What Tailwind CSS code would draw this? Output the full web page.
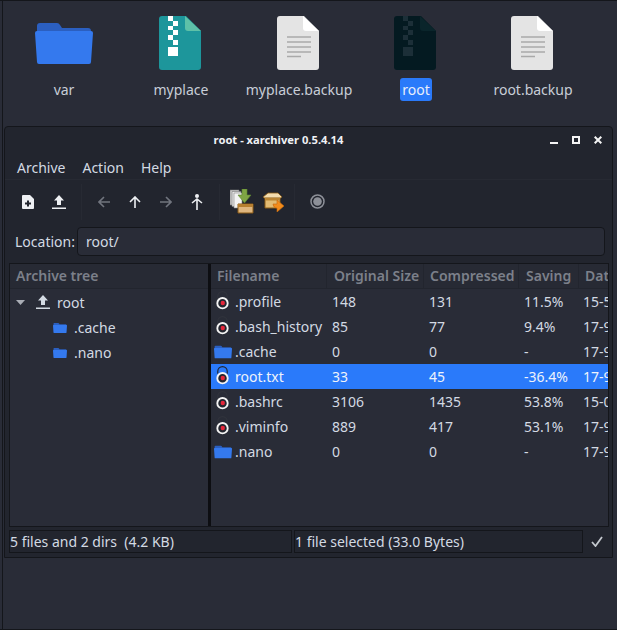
<!DOCTYPE html>
<html lang="en">
<head>
  <meta charset="UTF-8" />
  <title>root - xarchiver</title>
  <script src="https://cdn.jsdelivr.net/npm/@tailwindcss/browser@4"></script>
</head>
<body class="bg-[#292c37] font-['Noto_Sans',sans-serif] text-[14px] text-[#d3dae3] overflow-hidden">
  <svg class="hidden">
    <symbol id="folder" viewBox="0 0 58 41">
      <path d="M2 3q0-3 3-3h17q2 0 3 2l2 3h26q3 0 3 3v6H2z" fill="#2b5fc0"/>
      <path d="M0 10q0-2 2-2h54q2 0 2 2l-2 29q0 2-2 2H4q-2 0-2-2z" fill="#3479ee"/>
    </symbol>
    <symbol id="doc" viewBox="0 0 42 54">
      <path d="M3 0h24l15 15v36q0 3-3 3H3q-3 0-3-3V3q0-3 3-3z" fill="#e4e4e4"/>
      <path d="M26 0l16 15H29q-3 0-3-3z" fill="#fff"/>
      <path d="M10 21h24M10 26h24M10 31h24M10 36h24M10 40.500h14" stroke="#a9a9a9" stroke-width="1.400"/>
    </symbol>
    <symbol id="upload" viewBox="0 0 14 14">
      <path d="M7 0l5 5.500H9V10H5V5.500H2z" fill="currentColor"/><path d="M0 12.500h14V14H0z" fill="currentColor"/>
    </symbol>
    <symbol id="lock" viewBox="0 0 18 22">
      <path d="M4 8V5.500a5 5 0 0 1 10 0V8" fill="none" stroke="currentColor" stroke-width="1.200"/>
      <circle cx="9" cy="12.800" r="5.500" fill="#23262f" stroke="#f4f4f4" stroke-width="2"/>
      <circle cx="9.300" cy="12.600" r="2.300" fill="#e5263a"/>
    </symbol>
  </svg>

  <div class="h-[630px] w-[617px] border-y border-[#14161b]">
    <div class="ml-[2px] h-full border-l border-[#14161b]">
      <div class="h-[125px] pl-[1px] pt-[15px] flex">
        <div class="w-[120px] flex flex-col items-center">
          <svg class="w-[58px] h-[41px] mt-[7px] mb-[14px]"><use href="#folder"/></svg>
          <span class="leading-[23px] text-[#c8ced8]">var</span>
        </div>
        <div class="w-[114px] flex flex-col items-center">
          <svg class="w-[42px] h-[54px] mb-[8px] -translate-x-[1px]" viewBox="0 0 42 54">
            <path d="M3 0h24l15 15v36q0 3-3 3H3q-3 0-3-3V3q0-3 3-3z" fill="#1d969b"/>
            <path d="M26 0l16 15H29q-3 0-3-3z" fill="#5ec1a8"/>
            <path d="M9 0h5v5H9zM14 5h5v5h-5zM9 10h5v4H9zM14 14h5v5h-5zM9 19h5v5H9zM14 24h5v5h-5zM9 31h10v9H9z" fill="#fff"/>
          </svg>
          <span class="leading-[23px] text-[#c8ced8]">myplace</span>
        </div>
        <div class="w-[122px] flex flex-col items-center">
          <svg class="w-[42px] h-[54px] mb-[8px] -translate-x-[1px]"><use href="#doc"/></svg>
          <span class="leading-[23px] text-[#c8ced8] whitespace-nowrap">myplace.backup</span>
        </div>
        <div class="w-[112px] flex flex-col items-center">
          <svg class="w-[42px] h-[54px] mb-[8px] -translate-x-[1px]" viewBox="0 0 42 54">
            <path d="M3 0h24l15 15v36q0 3-3 3H3q-3 0-3-3V3q0-3 3-3z" fill="#041a21"/>
            <path d="M26 0l16 15H29q-3 0-3-3z" fill="#0a252b"/>
            <path d="M9 0h5v5H9zM14 5h5v5h-5zM9 10h5v4H9zM14 14h5v5h-5zM9 19h5v5H9zM14 24h5v5h-5zM9 31h10v9H9z" fill="#1c2f38"/>
          </svg>
          <span class="h-[23px] leading-[23px] px-[2px] rounded-[3px] bg-[#2a7afa] text-[#e8eefa]">root</span>
        </div>
        <div class="w-[122px] flex flex-col items-center">
          <svg class="w-[42px] h-[54px] mb-[8px] -translate-x-[1px]"><use href="#doc"/></svg>
          <span class="leading-[23px] text-[#c8ced8] whitespace-nowrap">root.backup</span>
        </div>
      </div>

      <div class="ml-[1px] w-[609px] h-[432px] bg-[#22252e] border border-[#14161b] rounded-t-[4px] flex flex-col">
        <!-- title bar -->
        <div class="relative h-[26px] shrink-0 flex items-center justify-center pt-[1px] pr-[60px] text-[11.200px] font-bold text-[#f0f2f5]">
          <span>root - xarchiver 0.5.4.14</span>
          <div class="absolute right-[10px] top-[9px] flex items-center gap-[14px]">
            <svg class="w-[8px] h-[8px]" viewBox="0 0 8 8"><path d="M0 6h8v2H0z" fill="#f4f4f4"/></svg>
            <svg class="w-[8px] h-[8px]" viewBox="0 0 8 8"><path d="M1 1h6v6H1z" fill="none" stroke="#f4f4f4" stroke-width="2"/></svg>
            <svg class="w-[8px] h-[8px]" viewBox="0 0 8 8"><path d="M.7.7l6.600 6.600M7.300.700L.7 7.300" stroke="#f4f4f4" stroke-width="2"/></svg>
          </div>
        </div>
        <!-- menu -->
        <div class="h-[27px] shrink-0 flex items-center gap-[17px] pt-[2px] pl-[12px] border-b border-[#272a33]">
          <span>Archive</span><span>Action</span><span>Help</span>
        </div>
        <!-- toolbar -->
        <div class="h-[45px] shrink-0 flex items-center pb-[2px]">
          <div class="flex items-center w-[77px] pl-[17px] gap-[18px] border-r border-[#272a33] h-[36px]">
            <svg class="w-[12px] h-[14px]" viewBox="0 0 12 14"><path d="M1 0h7l4 4v9q0 1-1 1H1q-1 0-1-1V1q0-1 1-1z" fill="#eef0f3"/><path d="M5 5.500h2v2h2v2H7v2H5v-2H3v-2h2z" fill="#22252e"/></svg>
            <svg class="w-[14px] h-[14px] text-[#eef0f3]"><use href="#upload"/></svg>
          </div>
          <div class="flex items-center w-[138px] pl-[16px] gap-[19px] border-r border-[#272a33] h-[36px]">
            <svg class="w-[12px] h-[12px]" viewBox="0 0 12 12"><path d="M6 1L1 6l5 5M1 6h11" fill="none" stroke="#71757e" stroke-width="1.600"/></svg>
            <svg class="w-[12px] h-[12px]" viewBox="0 0 12 12"><path d="M1 6l5-5 5 5M6 1v11" fill="none" stroke="#eef0f3" stroke-width="1.600"/></svg>
            <svg class="w-[12px] h-[12px]" viewBox="0 0 12 12"><path d="M6 1l5 5-5 5M11 6H0" fill="none" stroke="#71757e" stroke-width="1.600"/></svg>
            <svg class="w-[12px] h-[16px]" viewBox="0 0 12 16"><circle cx="6" cy="2" r="2" fill="#eef0f3"/><path d="M1 9l5-4 5 4M6 5v11" fill="none" stroke="#eef0f3" stroke-width="1.600"/></svg>
          </div>
          <div class="flex items-center w-[75px] pl-[10px] gap-[8px] border-r border-[#272a33] h-[36px]">
            <svg class="w-[24px] h-[25px]" viewBox="0 0 24 25">
              <path d="M0 1h9v15H0z" fill="#cfcfcf" stroke="#777" stroke-width=".6"/><path d="M2 2.500h9v15H2z" fill="#e6e6e6" stroke="#777" stroke-width=".6"/><path d="M4 4h8v15H4z" fill="#f4f4f4" stroke="#888" stroke-width=".6"/>
              <path d="M12 0h5v6h4l-6.500 8L8 6h4z" fill="#7fa544" stroke="#5d8430" stroke-width=".6"/>
              <path d="M8 15h15v9H8z" fill="#dfb67f" stroke="#8a5a14"/><path d="M8 15h15v3H8z" fill="#b67f30"/>
            </svg>
            <svg class="w-[23px] h-[20px]" viewBox="0 0 23 20">
              <path d="M1 5l5-4h10l4 4-3 2H4z" fill="#f3dcae" stroke="#8a5a14" stroke-width=".8"/>
              <path d="M3 6h15v10H3z" fill="#e2bb73" stroke="#8a5a14"/><path d="M3 6h15v2.500H3z" fill="#b98433"/>
              <path d="M11 12h4V8l7 6-7 6v-4h-1q-3-1-3-4z" fill="#f28c1c" stroke="#c2660d" stroke-width=".6"/>
            </svg>
          </div>
          <svg class="ml-[15px] w-[15px] h-[15px]" viewBox="0 0 15 15"><circle cx="7.500" cy="7.500" r="6.500" fill="none" stroke="#8d9098" stroke-width="1.500"/><circle cx="7.500" cy="7.500" r="4.300" fill="#8d9098"/></svg>
        </div>
        <!-- location -->
        <div class="mt-[2px] h-[29px] shrink-0 flex items-center pl-[10px] pr-[7px]">
          <span class="w-[62px]">Location:</span>
          <div class="flex-1 h-[29px] leading-[27px] px-[8px] bg-[#292c37] border border-[#14161b] rounded-[4px]">root/</div>
        </div>
        <!-- panes -->
        <div class="mt-[7px] ml-[4px] mr-[3px] h-[264px] shrink-0 flex border border-[#14161b] bg-[#292c37]">
          <div class="w-[198px] shrink-0">
            <div class="h-[25px] leading-[24px] pl-[6px] font-semibold text-[#7c808a] bg-[#272a34] border-b border-[#22252e]">Archive tree</div>
            <div class="h-[26px] flex items-center pl-[6px]">
              <svg class="w-[9px] h-[5px]" viewBox="0 0 9 5"><path d="M0 0h9L4.500 5z" fill="#a9adb5"/></svg>
              <svg class="ml-[11px] w-[14px] h-[14px]"><use href="#upload"/></svg>
              <span class="ml-[7px]">root</span>
            </div>
            <div class="h-[25px] flex items-center pl-[43px]">
              <svg class="w-[14px] h-[12px]"><use href="#folder"/></svg>
              <span class="ml-[7px]">.cache</span>
            </div>
            <div class="h-[25px] flex items-center pl-[43px]">
              <svg class="w-[14px] h-[12px]"><use href="#folder"/></svg>
              <span class="ml-[7px]">.nano</span>
            </div>
          </div>
          <div class="w-[3px] shrink-0 bg-[#0d0e12]"></div>
          <div class="flex-1 overflow-hidden">
            <div class="h-[25px] leading-[24px] grid grid-cols-[116px_97px_95px_60px_60px] font-semibold text-[#7c808a] bg-[#272a34] border-b border-[#22252e] whitespace-nowrap">
              <span class="pl-[6px] border-r border-[#22252e]">Filename</span>
              <span class="pl-[7px] border-r border-[#22252e]">Original Size</span>
              <span class="pl-[6px] border-r border-[#22252e]">Compressed</span>
              <span class="pl-[7px] border-r border-[#22252e]">Saving</span>
              <span class="pl-[6px]">Date</span>
            </div>
            <div class="h-[25px] leading-[25px] grid grid-cols-[116px_97px_95px_59px_61px] whitespace-nowrap">
              <span class="flex items-center"><svg class="ml-[3px] w-[17px] h-[21px] text-[#30333c]"><use href="#lock"/></svg><span class="ml-[4px]">.profile</span></span><span class="pl-[5px]">148</span><span class="pl-[5px]">131</span><span class="pl-[5px]">11.5%</span><span class="pl-[5px]">15-5-2020</span>
            </div>
            <div class="h-[25px] leading-[25px] grid grid-cols-[116px_97px_95px_59px_61px] whitespace-nowrap">
              <span class="flex items-center"><svg class="ml-[3px] w-[17px] h-[21px] text-[#30333c]"><use href="#lock"/></svg><span class="ml-[4px]">.bash_history</span></span><span class="pl-[5px]">85</span><span class="pl-[5px]">77</span><span class="pl-[5px]">9.4%</span><span class="pl-[5px]">17-9-2020</span>
            </div>
            <div class="h-[25px] leading-[25px] grid grid-cols-[116px_97px_95px_59px_61px] whitespace-nowrap">
              <span class="flex items-center"><svg class="ml-[3px] w-[18px] h-[14px]"><use href="#folder"/></svg><span class="ml-[3px]">.cache</span></span><span class="pl-[5px]">0</span><span class="pl-[5px]">0</span><span class="pl-[5px]">-</span><span class="pl-[5px]">17-9-2020</span>
            </div>
            <div class="h-[25px] leading-[25px] grid grid-cols-[116px_97px_95px_59px_61px] whitespace-nowrap bg-[#2a7afa] text-[#eef3fb]">
              <span class="flex items-center"><svg class="ml-[3px] w-[17px] h-[21px] text-[#22252e]"><use href="#lock"/></svg><span class="ml-[4px]">root.txt</span></span><span class="pl-[5px]">33</span><span class="pl-[5px]">45</span><span class="pl-[5px]">-36.4%</span><span class="pl-[5px]">17-9-2020</span>
            </div>
            <div class="h-[25px] leading-[25px] grid grid-cols-[116px_97px_95px_59px_61px] whitespace-nowrap">
              <span class="flex items-center"><svg class="ml-[3px] w-[17px] h-[21px] text-[#30333c]"><use href="#lock"/></svg><span class="ml-[4px]">.bashrc</span></span><span class="pl-[5px]">3106</span><span class="pl-[5px]">1435</span><span class="pl-[5px]">53.8%</span><span class="pl-[5px]">15-05-2020</span>
            </div>
            <div class="h-[25px] leading-[25px] grid grid-cols-[116px_97px_95px_59px_61px] whitespace-nowrap">
              <span class="flex items-center"><svg class="ml-[3px] w-[17px] h-[21px] text-[#30333c]"><use href="#lock"/></svg><span class="ml-[4px]">.viminfo</span></span><span class="pl-[5px]">889</span><span class="pl-[5px]">417</span><span class="pl-[5px]">53.1%</span><span class="pl-[5px]">17-9-2020</span>
            </div>
            <div class="h-[25px] leading-[25px] grid grid-cols-[116px_97px_95px_59px_61px] whitespace-nowrap">
              <span class="flex items-center"><svg class="ml-[3px] w-[18px] h-[14px]"><use href="#folder"/></svg><span class="ml-[3px]">.nano</span></span><span class="pl-[5px]">0</span><span class="pl-[5px]">0</span><span class="pl-[5px]">-</span><span class="pl-[5px]">17-9-2020</span>
            </div>
          </div>
        </div>
        <!-- status -->
        <div class="mt-[3px] ml-[4px] mr-[3px] h-[23px] flex items-center">
          <div class="w-[283px] h-full leading-[21px] border border-[#14161b] whitespace-nowrap">5 files and 2 dirs&nbsp; (4.2 KB)</div>
          <div class="ml-[2px] w-[289px] h-full leading-[21px] border border-[#14161b] whitespace-nowrap">1 file selected (33.0 Bytes)</div>
          <svg class="ml-[8px] w-[12px] h-[11px]" viewBox="0 0 12 11"><path d="M1 6l3.500 4L11 1" fill="none" stroke="#c4c8ce" stroke-width="1.800"/></svg>
        </div>
      </div>
    </div>
  </div>
</body>
</html>
